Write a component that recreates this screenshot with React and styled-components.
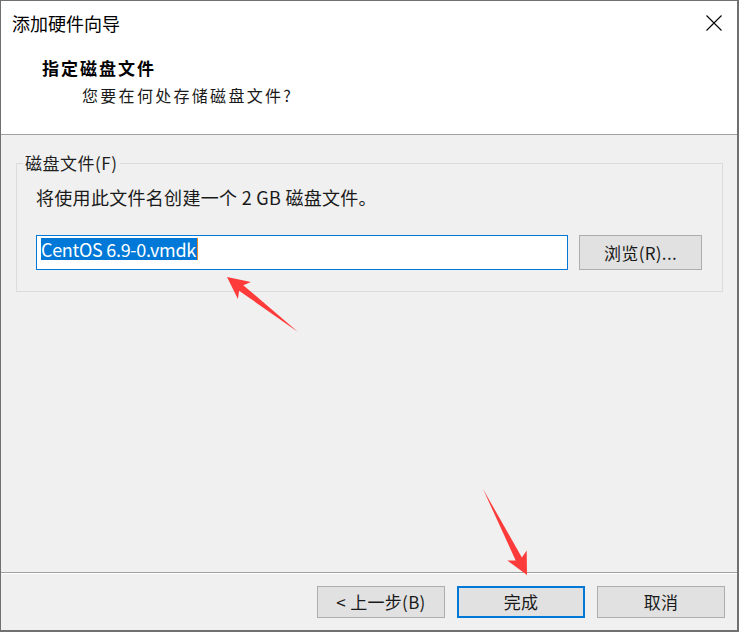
import React from "react";
import styled, { createGlobalStyle } from "styled-components";

const Global = createGlobalStyle`
  html, body { margin: 0; padding: 0; background: #ffffff; }
  * { box-sizing: border-box; }
  body { font-family: "Noto Sans CJK SC", "Noto Sans", sans-serif; color: #000; }
`;

const FONT = `"Noto Sans CJK SC", "Noto Sans", sans-serif`;

const Window = styled.div`
  position: relative;
  width: 739px;
  height: 632px;
  display: flex;
  flex-direction: column;
  border-style: solid;
  border-color: #707070;
  border-width: 1px 2px 2px 1px;
  background: #f0f0f0;
  font-family: ${FONT};
  overflow: hidden;
`;

const Header = styled.header`
  height: 134px;
  flex: none;
  background: #ffffff;
  border-bottom: 1px solid #a0a0a0;
  display: flex;
  flex-direction: column;
`;

const TitleRow = styled.div`
  display: flex;
  align-items: center;
  justify-content: space-between;
  height: 24px;
  margin-top: 10px;
  padding: 0 15px 0 11px;
`;

const Title = styled.div`
  font-size: 18px;
  line-height: 24px;
  color: #000;
`;

const CloseButton = styled.div`
  width: 16px;
  height: 16px;
  display: flex;
`;

const Heading = styled.div`
  margin-top: 22px;
  padding-left: ${(p) => p.$indent}px;
  font-size: ${(p) => p.$size}px;
  font-weight: ${(p) => (p.$bold ? 700 : 400)};
  letter-spacing: ${(p) => p.$spacing}px;
  line-height: 22px;
  color: ${(p) => (p.$bold ? "#000" : "#1a1a1a")};
  & + & {
    margin-top: 5px;
  }
`;

const Body = styled.main`
  flex: 1;
  padding: 17px 14px 0 15px;
`;

const GroupBox = styled.fieldset`
  margin: 0;
  padding: 0 20px 21px 19px;
  border: 1px solid #dcdcdc;
  min-width: 0;
`;

const Legend = styled.legend`
  margin-left: -13px;
  padding: 0 3px 0 2px;
  font-size: 17px;
  line-height: 22px;
  letter-spacing: 0.5px;
  color: #1e1e1e;
`;

const Description = styled.div`
  margin-top: 11px;
  font-size: 18px;
  line-height: 24px;
  letter-spacing: 0.3px;
  color: #1a1a1a;
`;

const FieldRow = styled.div`
  display: flex;
  align-items: center;
  gap: 11px;
  margin-top: 26px;
`;

const TextField = styled.div`
  width: 532px;
  height: 35px;
  background: #ffffff;
  border: 1px solid #0078d7;
  padding: 2px 0 0 4px;
  display: flex;
  align-items: flex-start;
`;

const Selection = styled.span`
  display: inline-block;
  height: 22px;
  background: #0078d7;
  color: #ffffff;
  font-size: 18px;
  line-height: 22px;
  letter-spacing: -0.3px;
  padding: 0 1px 0 0;
`;

const Caret = styled.span`
  display: inline-block;
  width: 1px;
  height: 22px;
  background: #e8862b;
`;

const Button = styled.div`
  width: ${(p) => p.$w}px;
  height: ${(p) => p.$h}px;
  flex: none;
  display: flex;
  align-items: center;
  justify-content: center;
  background: #e1e1e1;
  border: ${(p) => (p.$primary ? "2px solid #0078d7" : "1px solid #adadad")};
  font-size: 17px;
  line-height: 22px;
  color: #1a1a1a;
  letter-spacing: 0.3px;
`;

const Footer = styled.footer`
  flex: none;
  height: 58px;
  border-top: 1px solid #a0a0a0;
  box-shadow: inset 0 1px 0 #ffffff;
  display: flex;
  justify-content: flex-end;
  align-items: flex-start;
  gap: 12px;
  padding: 13px 12px 0 0;
`;

const Annotations = styled.svg`
  position: absolute;
  left: -1px;
  top: -1px;
  width: 739px;
  height: 632px;
  pointer-events: none;
`;

export default function App() {
  return (
    <>
      <Global />
      <Window>
        <Header>
          <TitleRow>
            <Title>添加硬件向导</Title>
            <CloseButton>
              <svg width="16" height="16" viewBox="0 0 16 16">
                <path d="M0.5 0.5 L15.5 15.5 M15.5 0.5 L0.5 15.5" stroke="#000" strokeWidth="1.1" fill="none" />
              </svg>
            </CloseButton>
          </TitleRow>
          <Heading $indent={41} $size={17} $spacing={2} $bold>指定磁盘文件</Heading>
          <Heading $indent={81} $size={16} $spacing={2.3}>您要在何处存储磁盘文件?</Heading>
        </Header>
        <Body>
          <GroupBox>
            <Legend>磁盘文件(F)</Legend>
            <Description>将使用此文件名创建一个 2 GB 磁盘文件。</Description>
            <FieldRow>
              <TextField>
                <Selection>CentOS 6.9-0.vmdk</Selection>
                <Caret />
              </TextField>
              <Button $w={123} $h={35}>浏览(R)...</Button>
            </FieldRow>
          </GroupBox>
        </Body>
        <Footer>
          <Button $w={128} $h={32}>&lt; 上一步(B)</Button>
          <Button $w={128} $h={32} $primary>完成</Button>
          <Button $w={128} $h={32}>取消</Button>
        </Footer>
        <Annotations viewBox="0 0 739 632">
          <polygon
            points="298,332 243.3,285.2 250.9,282.1 227,277 237.9,298.9 239.1,290.8"
            fill="#fd3b3b"
          />
          <polygon
            points="483,489 521.9,557.4 526.7,550.4 527,575 507.3,560.4 515.7,560.6"
            fill="#fd3b3b"
          />
        </Annotations>
      </Window>
    </>
  );
}
